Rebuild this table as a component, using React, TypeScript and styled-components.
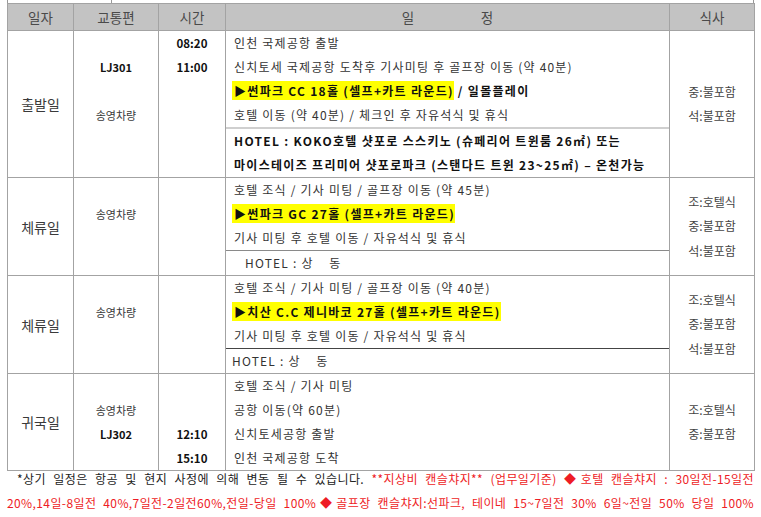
import React from "react";
import styled, { createGlobalStyle } from "styled-components";

const GlobalStyle = createGlobalStyle`
  body {
    margin: 0;
    background: #fff;
    font-family: "Noto Sans CJK KR", "Noto Sans", sans-serif;
    color: #333;
  }
`;

const Page = styled.div`
  padding-left: 7px;
  width: 747px;
`;

const PrevTable = styled.div`
  display: grid;
  grid-template-columns: 103px 1fr;
  height: 3px;
  border-left: 1px solid #999;
  border-right: 1px solid #999;

  & > div + div {
    border-left: 1px solid #999;
  }
`;

const Table = styled.table`
  width: 747px;
  border-collapse: collapse;
  table-layout: fixed;
  font-size: 12px;
`;

const Head = styled.th`
  height: 26px;
  padding: 0;
  background: #c3c3c3;
  border: 1px solid #a3a3a3;
  font-weight: 400;
  font-size: 13.5px;
  color: #4a4a4a;
  white-space: pre;
`;

const Cell = styled.td<{ $align?: "top" | "middle" }>`
  padding: 0;
  border: 1px solid #a3a3a3;
  vertical-align: ${(p) => p.$align || "top"};
  text-align: center;
`;

const DayName = styled.span`
  font-size: 14px;
  color: #3a3a3a;
`;

const Slot = styled.div<{ $bold?: boolean; $size: number }>`
  height: 24px;
  line-height: 24px;
  font-size: ${(p) => p.$size}px;
  font-weight: ${(p) => (p.$bold ? 700 : 400)};
  color: ${(p) => (p.$bold ? "#111" : "#3a3a3a")};
`;

const Plan = styled.td`
  padding: 0;
  border: 1px solid #a3a3a3;
  vertical-align: top;
  text-align: left;
`;

const Line = styled.div<{ $indent?: number }>`
  height: 24px;
  line-height: 24px;
  padding-left: ${(p) => p.$indent ?? 8}px;
  white-space: pre;
  letter-spacing: 1.2px;
  color: #333;
`;

const Strong = styled.span`
  font-weight: 700;
  letter-spacing: 1.3px;
  color: #111;
`;

const Mark = styled(Strong)`
  background: #ffff00;
  margin-left: -2px;
  padding: 1px 0 1px 2px;
`;

const HotelBlock = styled.div<{ $rule: string }>`
  border-top: ${(p) => p.$rule};
`;

const Meal = styled.div`
  line-height: 24.5px;
  font-size: 12px;
  color: #444;
`;

const Note = styled.div`
  margin-top: -4px;
  font-size: 12px;
  line-height: 24px;
  letter-spacing: 0.4px;
  color: #222;
`;

const NoteLine = styled.div<{ $indent?: number }>`
  padding-left: ${(p) => p.$indent ?? 0}px;
  text-align: justify;
  text-align-last: justify;
`;

const Red = styled.span`
  color: #ee1c25;
`;

type SlotItem = { text?: string; bold?: boolean };

const Slots = ({ items, size = 11 }: { items: SlotItem[]; size?: number }) => (
  <>
    {items.map((s, i) => (
      <Slot key={i} $bold={s.bold} $size={size}>
        {s.text}
      </Slot>
    ))}
  </>
);

const Meals = ({ items }: { items: string[] }) => (
  <>
    {items.map((m) => (
      <Meal key={m}>{m}</Meal>
    ))}
  </>
);

export default function App() {
  return (
    <Page>
      <GlobalStyle />
      <PrevTable>
        <div />
        <div />
      </PrevTable>
      <Table>
        <colgroup>
          <col style={{ width: 66 }} />
          <col style={{ width: 85 }} />
          <col style={{ width: 67 }} />
          <col style={{ width: 444 }} />
          <col style={{ width: 85 }} />
        </colgroup>
        <thead>
          <tr>
            <Head>일자</Head>
            <Head>교통편</Head>
            <Head>시간</Head>
            <Head>{"일                      정"}</Head>
            <Head>식사</Head>
          </tr>
        </thead>
        <tbody>
          <tr>
            <Cell $align="middle">
              <DayName>출발일</DayName>
            </Cell>
            <Cell>
              <Slots items={[{}, { text: "LJ301", bold: true }, {}, { text: "송영차량" }]} />
            </Cell>
            <Cell>
              <Slots
                size={11.5}
                items={[
                  { text: "08:20", bold: true },
                  { text: "11:00", bold: true },
                ]}
              />
            </Cell>
            <Plan>
              <Line>인천 국제공항 출발</Line>
              <Line>신치토세 국제공항 도착후 기사미팅 후 골프장 이동 (약 40분)</Line>
              <Line>
                <Mark>▶썬파크 CC 18홀 (셀프+카트 라운드)</Mark>
                <Strong> / 일몰플레이</Strong>
              </Line>
              <Line>호텔 이동 (약 40분) / 체크인 후 자유석식 및 휴식</Line>
              <HotelBlock $rule="2px solid #cfcfcf">
                <Line>
                  <Strong>HOTEL : KOKO호텔 샷포로 스스키노 (슈페리어 트윈룸 26㎡) 또는</Strong>
                </Line>
                <Line>
                  <Strong>마이스테이즈 프리미어 샷포로파크 (스탠다드 트윈 23~25㎡) – 온천가능</Strong>
                </Line>
              </HotelBlock>
            </Plan>
            <Cell $align="middle">
              <Meals items={["중:불포함", "석:불포함"]} />
            </Cell>
          </tr>
          <tr>
            <Cell $align="middle">
              <DayName>체류일</DayName>
            </Cell>
            <Cell>
              <Slots items={[{}, { text: "송영차량" }]} />
            </Cell>
            <Cell />
            <Plan>
              <Line>호텔 조식 / 기사 미팅 / 골프장 이동 (약 45분)</Line>
              <Line>
                <Mark>▶썬파크 GC 27홀 (셀프+카트 라운드)</Mark>
              </Line>
              <Line>기사 미팅 후 호텔 이동 / 자유석식 및 휴식</Line>
              <HotelBlock $rule="1px solid #8a8a8a">
                <Line $indent={19}>{"HOTEL : 상    동"}</Line>
              </HotelBlock>
            </Plan>
            <Cell $align="middle">
              <Meals items={["조:호텔식", "중:불포함", "석:불포함"]} />
            </Cell>
          </tr>
          <tr>
            <Cell $align="middle">
              <DayName>체류일</DayName>
            </Cell>
            <Cell>
              <Slots items={[{}, { text: "송영차량" }]} />
            </Cell>
            <Cell />
            <Plan>
              <Line>호텔 조식 / 기사 미팅 / 골프장 이동 (약 40분)</Line>
              <Line>
                <Mark>▶치산 C.C 제니바코 27홀 (셀프+카트 라운드)</Mark>
              </Line>
              <Line>기사 미팅 후 호텔 이동 / 자유석식 및 휴식</Line>
              <HotelBlock $rule="1px solid #444">
                <Line $indent={6}>{"HOTEL : 상    동"}</Line>
              </HotelBlock>
            </Plan>
            <Cell $align="middle">
              <Meals items={["조:호텔식", "중:불포함", "석:불포함"]} />
            </Cell>
          </tr>
          <tr>
            <Cell $align="middle">
              <DayName>귀국일</DayName>
            </Cell>
            <Cell>
              <Slots items={[{}, { text: "송영차량" }, { text: "LJ302", bold: true }]} />
            </Cell>
            <Cell>
              <Slots
                size={11.5}
                items={[{}, {}, { text: "12:10", bold: true }, { text: "15:10", bold: true }]}
              />
            </Cell>
            <Plan>
              <Line>호텔 조식 / 기사 미팅</Line>
              <Line>공항 이동(약 60분)</Line>
              <Line>신치토세공항 출발</Line>
              <Line>인천 국제공항 도착</Line>
            </Plan>
            <Cell $align="middle">
              <Meals items={["조:호텔식", "중:불포함"]} />
            </Cell>
          </tr>
        </tbody>
      </Table>
      <Note>
        <NoteLine $indent={10}>
          *상기 일정은 항공 및 현지 사정에 의해 변동 될 수 있습니다.{" "}
          <Red>**지상비 캔슬챠지** (업무일기준) ◆호텔 캔슬챠지 : 30일전-15일전</Red>
        </NoteLine>
        <NoteLine>
          <Red>
            20%,14일-8일전 40%,7일전-2일전60%,전일-당일 100%◆골프장 캔슬챠지:선파크, 테이네 15~7일전 30% 6일~전일 50% 당일 100%
          </Red>
        </NoteLine>
      </Note>
    </Page>
  );
}
